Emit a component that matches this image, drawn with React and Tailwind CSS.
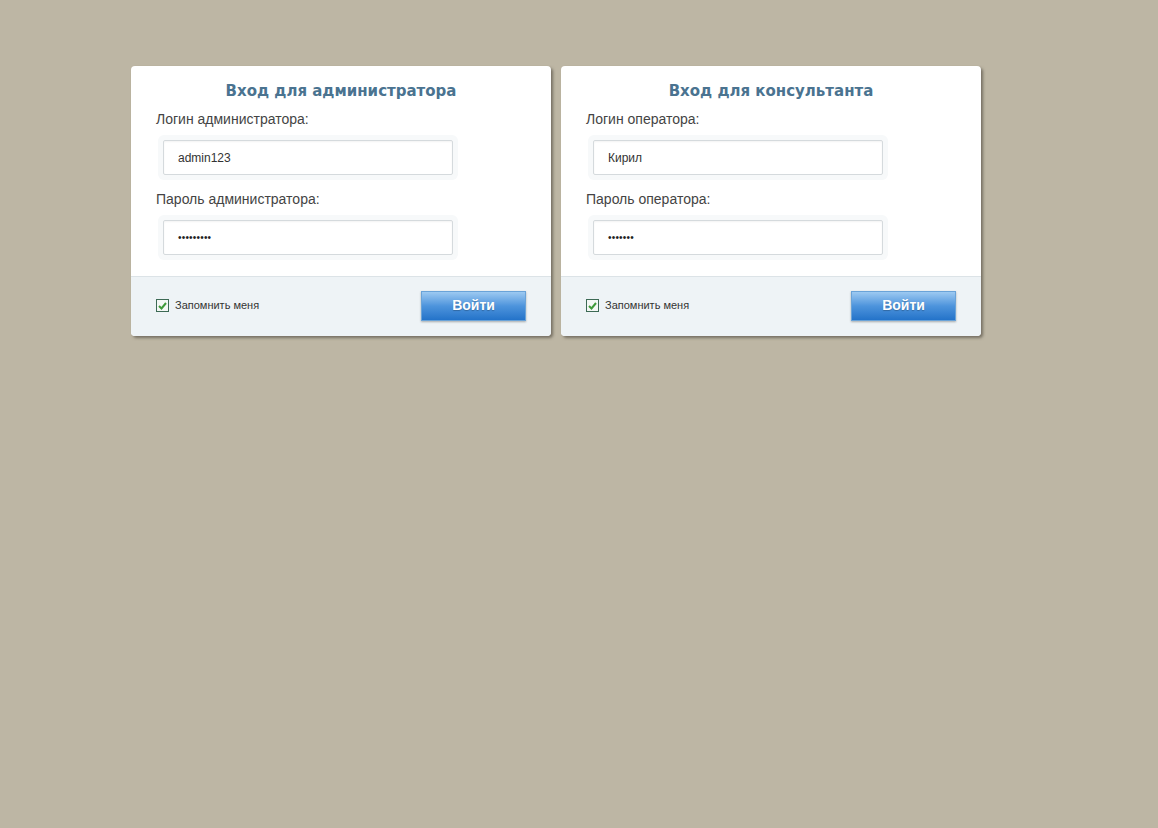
import React from "react";

function Field({ label, value, mt, dots }) {
  return (
    <div className={mt}>
      <div className="text-[14px] leading-[18px] text-[#444] pl-[25px]">{label}</div>
      <div className="pl-[32px] mt-[12px]">
        <div className="w-[290px] h-[35px] border border-[#d5dadd] rounded-[2px] bg-white shadow-[0_0_0_5px_#f7f9fa,inset_0_1px_2px_rgba(0,0,0,0.05)] flex items-center pl-[14px] text-[12px] text-[#333]">
          {dots ? (
            <span className="text-[10px] tracking-[0.2px] text-[#222]">{value}</span>
          ) : (
            value
          )}
        </div>
      </div>
    </div>
  );
}

function Card({ title, l1, v1, l2, v2 }) {
  return (
    <div className="w-[420px] h-[270px] bg-white rounded-[4px] shadow-[2px_2px_3px_rgba(60,55,45,0.55)] flex flex-col overflow-hidden">
      <div className="pt-[15px] text-center text-[15px] leading-[20px] font-bold text-[#4a7390]" style={{ fontFamily: '"DejaVu Sans", sans-serif' }}>
        {title}
      </div>
      <Field label={l1} value={v1} mt="mt-[9px]" />
      <Field label={l2} value={v2} mt="mt-[15px]" dots />
      <div className="mt-auto h-[60px] bg-[#eef3f6] border-t border-[#dce3e7] flex items-center justify-between pl-[25px] pr-[25px] pb-[2px]">
        <div className="flex items-center gap-[6px]">
          <div className="w-[13px] h-[13px] border border-[#3d6a55] bg-[#f4f7f5] flex items-center justify-center">
            <svg width="9" height="8" viewBox="0 0 9 8">
              <path d="M1 4 L3.5 6.5 L8 1" stroke="#3f9a3a" strokeWidth="2" fill="none" />
            </svg>
          </div>
          <span className="text-[11px] text-[#333]">Запомнить меня</span>
        </div>
        <button className="w-[105px] h-[30px] border border-[#6aa3d8] bg-gradient-to-b from-[#9cc9f1] via-[#4d94dc] to-[#2373c9] text-white font-bold text-[14px] shadow-[0_1px_2px_rgba(0,0,0,0.3)] [text-shadow:0_1px_1px_rgba(0,0,0,0.25)]">
          Войти
        </button>
      </div>
    </div>
  );
}

export default function App() {
  return (
    <div className="w-[1158px] h-[828px] bg-[#bdb6a4]" style={{ fontFamily: '"Liberation Sans", Arial, sans-serif' }}>
      <div className="flex gap-[10px] pl-[131px] pt-[66px]">
        <Card title="Вход для администратора" l1="Логин администратора:" v1="admin123" l2="Пароль администратора:" v2="•••••••••" />
        <Card title="Вход для консультанта" l1="Логин оператора:" v1="Кирил" l2="Пароль оператора:" v2="•••••••" />
      </div>
    </div>
  );
}
